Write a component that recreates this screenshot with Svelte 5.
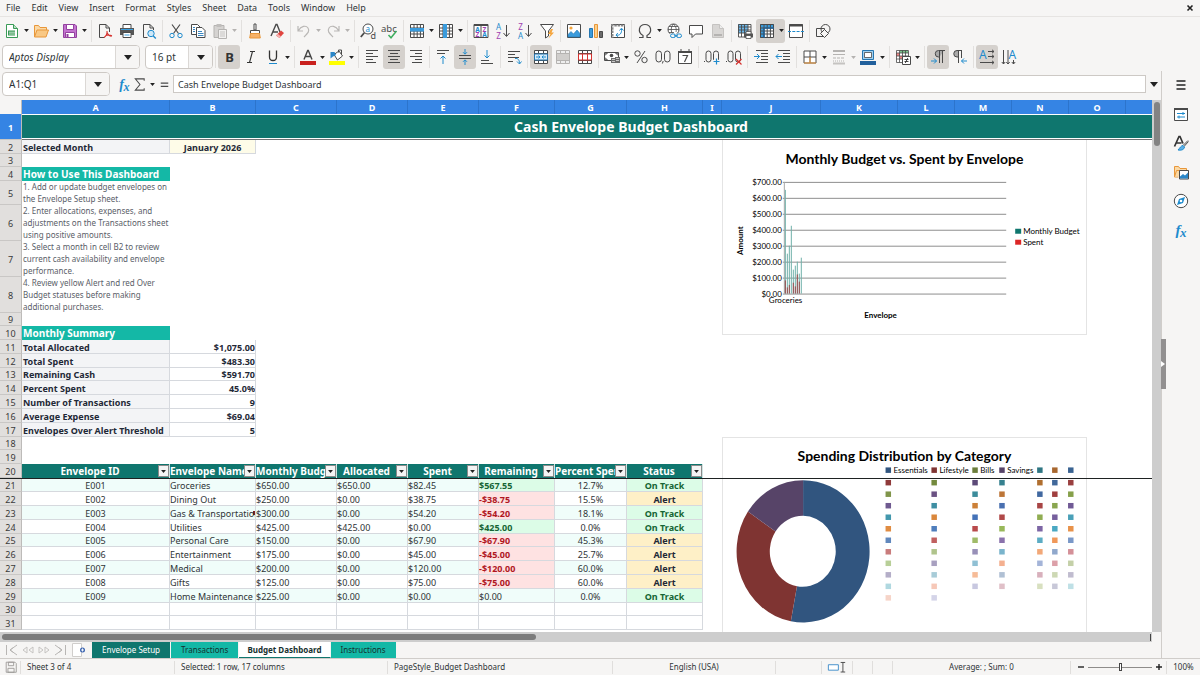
<script>
  const menus = ['File', 'Edit', 'View', 'Insert', 'Format', 'Styles', 'Sheet', 'Data', 'Tools', 'Window', 'Help'];

  const K = '#4a4a4a';
  const B = '#1e8bcd';
  const grid = (c = K) =>
    `<path d="M1.5 1.5h13v13h-13zM1.5 5h13M1.5 8h13M1.5 11h13M5 1.5v13M8.2 1.5v13M11.4 1.5v13" fill="none" stroke="${c}"/>`;
  const lines = (list) =>
    list.map(([x1, x2, y]) => `<path d="M${x1} ${y}h${x2 - x1}" stroke="${K}" fill="none"/>`).join('');

  const icons = {
    new: `<path d="M2.5 1.5h7l4 4v9h-11z" fill="#fff" stroke="#3a9b57"/><path d="M9.5 1.5v4h4" fill="#b9e0c4" stroke="#3a9b57"/><path d="M4 7.5h7v5H4z" fill="#3a9b57"/><path d="M5 9.2h8M5 11h8" stroke="#fff" stroke-width=".7"/>`,
    open: `<path d="M1.5 14V2.5h4l1.5 2h6.500v3" fill="#fbd9a5" stroke="#e8973a"/><path d="M1.500 14L4 7h11.500l-2.500 7z" fill="#f9c884" stroke="#e8973a"/>`,
    save: `<path d="M1.500 1.500h11.500l1.500 1.500v11.500h-13z" fill="#c373cf" stroke="#93419f"/><path d="M4.500 1.500h7v5h-7z" fill="#fff" stroke="#93419f"/><path d="M3.500 9.500h9v5h-9z" fill="#fff" stroke="#93419f"/><path d="M5.500 11v3.500" stroke="#93419f" stroke-width="2"/>`,
    pdf: `<path d="M2.500 14.500v-13h6.500l3.500 3.500v4M2.500 14.500h5" fill="none" stroke="${K}"/><path d="M9 1.500v3.500h3.500" fill="none" stroke="${K}"/><path d="M7 14.500c2-1 3.500-4 3-6.500M9.800 9c1 3 3 4 5 4.200M7 14.500c1.500-2.500 5-3 8-1.800" fill="none" stroke="#d6322f" stroke-width="1.100"/>`,
    print: `<path d="M4 5V1.500h8V5" fill="#fff" stroke="${K}"/><path d="M1 5h14v7H1z" fill="#565656"/><path d="M2 6.500h12" stroke="#3aa0e0"/><path d="M4 9.500h8v5H4z" fill="#fff" stroke="${K}"/><path d="M5.500 12h5" stroke="#3aa0e0"/>`,
    preview: `<path d="M2.500 14.500v-13h6.500l3.500 3.500v2M2.500 14.500h4" fill="none" stroke="${K}"/><path d="M9 1.500v3.500h3.500" fill="none" stroke="${K}"/><circle cx="10" cy="10.500" r="3.200" fill="#cfe8f8" stroke="${B}"/><path d="M12.300 13l2.500 2.500" stroke="${B}" stroke-width="1.400"/>`,
    cut: `<path d="M4 1.500l6.500 9M12 1.500l-6.500 9" stroke="${K}" stroke-width="1.200" fill="none"/><circle cx="4" cy="12.500" r="2.200" fill="none" stroke="${B}"/><circle cx="12" cy="12.500" r="2.200" fill="none" stroke="${B}"/>`,
    copy: `<path d="M1.500 1.500h6l2.500 2.500v7.500h-8.500z" fill="#fff" stroke="${K}"/><path d="M6.500 4.500h5.500l3 3v7h-8.500z" fill="#fff" stroke="${K}"/><path d="M8 8.500h4M8 10.500h5.500M8 12.500h5.500M3 4.500h2M3 6.500h2M3 8.500h2" stroke="#3a87c0"/>`,
    paste: `<path d="M2 2.500h10v12H2z" fill="#d5d3d1" stroke="#b5b3b1"/><path d="M4.500 1h5v3h-5z" fill="#c0bebc"/><path d="M6.500 6.500h8v9h-8z" fill="#f2f1f0" stroke="#b5b3b1"/><path d="M8 9h5M8 11h5M8 13h5" stroke="#c5c3c1"/>`,
    brush: `<path d="M7 1h2v6H7z" fill="#fff" stroke="${K}"/><path d="M3.500 7.500h9v3h-9z" fill="#fff" stroke="${K}"/><path d="M3.500 10.500h9l.8 4.500H2.700z" fill="#f7b268" stroke="#e8973a"/>`,
    clear: `<path d="M2 13L7 1.500h1L11 9M4 9h5" fill="none" stroke="${K}" stroke-width="1.400"/><path d="M12 7.500l3 2.500-4.500 5-3.500-2.500z" fill="#e0443f"/><path d="M7 12.500l1.800-1.800 3.200 2.700-1.500 1.600z" fill="#f4b0ae"/>`,
    undo: `<path d="M2 3v5h5M2.500 7.500C5 3 10 2 12 5s0 5-4 9" fill="none" stroke="#b9b7b5" stroke-width="1.200"/>`,
    redo: `<path d="M14 3v5H9M13.500 7.500C11 3 6 2 4 5s0 5 4 9" fill="none" stroke="#b9b7b5" stroke-width="1.200"/>`,
    find: `<circle cx="8" cy="6" r="5" fill="#fff" stroke="${K}"/><path d="M4.300 9.700L.8 14" stroke="${K}" stroke-width="1.800"/><text x="5.400" y="8.500" font-size="8" font-family="Noto Sans" fill="${B}">a</text><text x="10.500" y="15.500" font-size="9" font-family="Noto Sans" fill="${K}">d</text>`,
    spell: `<text x="-1" y="8.500" font-size="9.500" font-family="Noto Sans" fill="${K}">abc</text><path d="M6.500 12l2.500 2.800L14.500 8" fill="none" stroke="#3fae5f" stroke-width="1.500"/>`,
    rows: `<path d="M1.500 1.500h13v13h-13z" fill="#fff"/>${grid()}<path d="M1 5h14v3.500H1z" fill="#3a9bdc"/>`,
    cols: `<path d="M1.500 1.500h13v13h-13z" fill="#fff"/>${grid()}<path d="M5 1h4v14H5z" fill="#3a9bdc"/>`,
    sort: `<path d="M1 1.500h14v13H1zM8 1.500v13" fill="#fff" stroke="${K}"/><path d="M1 2h14" stroke="${K}" stroke-width="2"/><g font-size="6.500" font-weight="bold" font-family="Noto Sans"><text x="2.200" y="8.500" fill="${B}">A</text><text x="2.400" y="14" fill="#a03fb0">Z</text><text x="9.400" y="8.500" fill="#a03fb0">Z</text><text x="9.200" y="14" fill="${B}">A</text></g>`,
    asc: `<g font-size="8" font-family="Noto Sans"><text x="1" y="7" fill="${B}">A</text><text x="1.200" y="15.500" fill="#a03fb0">Z</text></g><path d="M11.500 2v11M8.500 10l3 3.500 3-3.500" fill="none" stroke="${K}"/>`,
    desc: `<g font-size="8" font-family="Noto Sans"><text x="1.200" y="7" fill="#a03fb0">Z</text><text x="1" y="15.500" fill="${B}">A</text></g><path d="M11.500 2v11M8.500 10l3 3.500 3-3.500" fill="none" stroke="${K}"/>`,
    filter: `<path d="M1.500 1.500h13L9.500 8v5l-3 2V8z" fill="#fff" stroke="${K}"/><path d="M12 6l-3 5h2.500L9.500 15.500 15 9.500h-2.500L14 6z" fill="#f4a53d"/>`,
    image: `<path d="M1.500 1.500h13v13h-13z" fill="#fff" stroke="${K}"/><circle cx="5" cy="5" r="1.600" fill="#f4a53d"/><path d="M2 14v-2.500l3-3 2.500 2.500L11 7l3 3.500V14z" fill="#3a9bdc" stroke="#2576b0" stroke-width=".6"/>`,
    chart: `<path d="M1.500 5.500h3v9h-3z" fill="#3a9bdc" stroke="#2576b0"/><path d="M6.500 1.500h3v13h-3z" fill="#fbd08a" stroke="#e8973a"/><path d="M11.500 8.500h3v6h-3z" fill="#6b6b6b" stroke="${K}"/>`,
    pivot: `<path d="M1.500 1.500h13v13h-13z" fill="#fff" stroke="${K}"/><path d="M1 2.500h14M2.500 1v14" stroke="#8a8a8a" stroke-width="2" stroke-dasharray="2.500 .8"/><path d="M6 12c4 1 6-2 5.500-6M7.800 10L6 12.200l2 1.500M9.500 7.500l2-2.300L13.500 7.500" fill="none" stroke="${B}"/>`,
    omega: `<path d="M2 14.500h4v-2C0 9 2 1.500 8 1.500s8 7.500 2 11v2h4" fill="none" stroke="${K}" stroke-width="1.200"/>`,
    link: `<circle cx="7.500" cy="6.500" r="5.500" fill="#fff" stroke="${K}"/><path d="M2 6.500h11M3 3.500h9M3 9.500h5M7.500 1c-3 3-3 8 0 11M7.500 1c3 3 3 6 2.500 8" fill="none" stroke="${K}" stroke-width=".8"/><path d="M4 10.500h12v4.500H4z" fill="#f6f5f4"/><rect x="4.500" y="11" width="5" height="3.500" rx="1.700" fill="none" stroke="${B}"/><rect x="10.500" y="11" width="5" height="3.500" rx="1.700" fill="none" stroke="${B}"/><path d="M8 12.800h4" stroke="${B}"/>`,
    comment: `<path d="M1.500 2.500h13v8.500H7.500L4 14.500V11H1.500z" fill="#fff" stroke="${K}"/>`,
    header: `<path d="M2.500 1.500h7l4 4v9h-11z" fill="#d8d6d4" stroke="#c5c3c1"/><path d="M9.500 1.500v4h4" fill="#eee" stroke="#c5c3c1"/><path d="M4 12h8" stroke="#b5b3b1" stroke-width="2"/>`,
    printarea: `<path d="M1.500 1.500h12v12h-12z" fill="#fff"/><path d="M1 1h10v9H1z" fill="#6cb6e8"/><path d="M1.500 1.500h12.500v12.500h-12.500zM1.500 4h12.500M1.500 7h12.500M1.500 10h12.500M4.500 1.500v12.500M7.500 1.500v12.500M11 1.500v12.500" fill="none" stroke="${K}" stroke-width=".9"/><path d="M7 10.500h9v4H7z" fill="#565656"/><path d="M9 8.500h5v2.500H9zM9 12.500h5v3H9z" fill="#fff" stroke="${K}" stroke-width=".8"/>`,
    freeze: `<path d="M1.500 1.500h13v13h-13z" fill="#fff"/><path d="M1 1h14v3.500H5v10.500H1z" fill="#3a9bdc"/>${grid()}<path d="M5 5h10M5 5v10" stroke="#1f5f93" stroke-width="1.500"/>`,
    split: `<path d="M1.500 1.500h13v13h-13z" fill="#fff" stroke="${K}"/><path d="M1 2.500h14" stroke="${K}" stroke-width="2"/><path d="M0 8.500h16" stroke="${B}" stroke-dasharray="3 1.300"/>`,
    shapes: `<path d="M1.500 5.500h8v8h-8z" fill="#f6f5f4" stroke="${K}"/><circle cx="10.500" cy="6" r="4.500" fill="none" stroke="${K}"/><path d="M9.500 6.500l4 4-4 4-4-4z" fill="#f6f5f4" stroke="${K}"/>`,
    bold: `<text x="4.200" y="13" font-size="13" font-weight="bold" font-family="Noto Sans" fill="#333">B</text>`,
    italic: `<path d="M7 2.500h5M4 13.500h5M9.500 2.500l-3 11" stroke="#333" stroke-width="1.100" fill="none"/>`,
    underline: `<path d="M4.500 1.500v6.500q0 3.500 3.500 3.500t3.500-3.500V1.500" stroke="#333" stroke-width="1.300" fill="none"/><path d="M4 14.500h8" stroke="${B}"/>`,
    fontcolor: `<path d="M4 10.500L7.700 1.500h.6L12 10.500M5.200 7.500h5.600" stroke="#444" stroke-width="1.400" fill="none"/><path d="M0 12h16v4H0z" fill="#c9211e"/>`,
    highlight: `<path d="M5 5.500l5-3.500 3.500 5-5 4z" fill="#fff" stroke="${K}"/><path d="M9.500 3.500V1h3v4" fill="none" stroke="${K}"/><path d="M1.500 9.500V3h4l1.500 3-3 1.500z" fill="#2a86c8"/><path d="M0 12h16v4H0z" fill="#ff0"/>`,
    left: lines([[2, 14, 1.5], [2, 9, 4.5], [2, 14, 7.5], [2, 9, 10.5], [2, 12, 13.5]]),
    center: lines([[2, 14, 1.5], [4, 12, 4.5], [2, 14, 7.5], [4, 12, 10.5], [2, 14, 13.5]]),
    right: lines([[2, 14, 1.5], [7, 14, 4.5], [2, 14, 7.5], [7, 14, 10.5], [4, 14, 13.5]]),
    top: lines([[2, 14, 1.5], [2, 10, 4.5]]) + `<path d="M8 15V7M5.500 9.500L8 7l2.500 2.500" fill="none" stroke="${B}"/>`,
    middle: lines([[2, 14, 6.5], [2, 14, 9.5]]) + `<path d="M8 0v5M6 3.200l2 2 2-2M8 16v-5M6 12.800l2-2 2 2" fill="none" stroke="${B}"/>`,
    bottom: lines([[2, 10, 11.5], [2, 14, 14.5]]) + `<path d="M8 1v8M5.500 6.500L8 9l2.500-2.500" fill="none" stroke="${B}"/>`,
    wrap: lines([[2, 14, 2.5], [2, 9, 5.5], [2, 13, 8.5], [2, 7, 12.5]]) + `<path d="M9 9.500c3-.5 4.500 1.500 4.500 5M11 12.500l2.500 2.500 2-2.500" fill="none" stroke="${B}"/>`,
    merge: `<path d="M1.500 1.500h13v13h-13zM1.500 4.500h13M1.500 11.500h13M5.500 1.500v3M10.500 1.500v3M5.500 11.500v3M10.500 11.500v3" fill="#fff" stroke="${K}"/><path d="M1.500 5h13v6h-13z" fill="#d6ebfa" stroke="#2576b0"/><path d="M3 8h4M5.500 6.500L7 8 5.500 9.500M13 8H9M10.500 6.500L9 8l1.500 1.500" fill="none" stroke="${B}"/>`,
    mergecells: `<path d="M1.500 1.500h13v13h-13zM1.500 4.500h13M1.500 11.500h13M5.500 1.500v3M10.500 1.500v3M5.500 11.500v3M10.500 11.500v3" fill="#eee" stroke="#b5b3b1"/><path d="M2 5h12v6H2z" fill="#d0cecc"/>`,
    unmerge: `<path d="M1.500 1.500h13v13h-13zM1.500 4.500h13M1.500 11.500h13M5.500 1.500v3M10.500 1.500v3M5.500 11.500v3M10.500 11.500v3" fill="#fff" stroke="${K}"/><path d="M1.500 5h13v6h-13zM5.500 5v6M10.500 5v6" fill="#fff" stroke="#d6322f"/>`,
    currency: `<path d="M.5 3.500h14v8H.5z" fill="#fff" stroke="${K}"/><path d="M1 4l2.500 0L1 6.500M14 4h-2.500L14 6.500M1 11h2.500L1 8.500" fill="#999" stroke="${K}" stroke-width=".7"/><circle cx="7.500" cy="6.500" r="1.800" fill="${K}"/><path d="M7 9h5v5H7zM11 8h5v6h-5z" fill="#6b6b6b"/><path d="M8 10.500h3M8 12.500h3M12 9.500h3M12 11.500h3" stroke="#ddd" stroke-width=".8"/>`,
    percent: `<circle cx="4.500" cy="4.500" r="2.700" fill="none" stroke="${K}"/><circle cx="11.500" cy="11" r="2.700" fill="none" stroke="${K}"/><path d="M12 2L4 14" stroke="${K}"/>`,
    number: `<rect x="1" y="2" width="5.500" height="11" rx="2.750" fill="none" stroke="${K}"/><rect x="9.500" y="2" width="5.500" height="11" rx="2.750" fill="none" stroke="${K}"/><path d="M8.200 12l-.8 2.500" stroke="${K}"/>`,
    date: `<path d="M1.500 2.500h13v12h-13z" fill="#fff" stroke="${K}"/><path d="M1 3h14" stroke="${K}" stroke-width="2"/><path d="M4 0v3M12 0v3" stroke="${K}"/><path d="M5.500 6.500h5l-3 6.500" fill="none" stroke="${K}" stroke-width="1.200"/>`,
    adddec: `<path d="M0 12.500h1" stroke="${K}"/><rect x="2" y="2" width="5" height="11" rx="2.500" fill="none" stroke="${K}"/><rect x="9.500" y="2" width="5" height="11" rx="2.500" fill="none" stroke="${K}"/><path d="M9 12.500h7M12.500 9v7" stroke="#f6f5f4" stroke-width="3"/><path d="M9.500 12.500h6M12.500 9.500v6" stroke="${B}" stroke-width="1.200"/>`,
    deldec: `<path d="M0 12.500h1" stroke="${K}"/><rect x="2" y="2" width="5" height="11" rx="2.500" fill="none" stroke="${K}"/><rect x="9.500" y="2" width="5" height="11" rx="2.500" fill="none" stroke="${K}"/><path d="M10 10l5.500 5.500M15.500 10L10 15.500" stroke="#d6322f" stroke-width="1.200"/>`,
    indent: lines([[3, 15, 1.5], [8, 15, 4.5], [8, 15, 7.5], [8, 15, 10.5], [3, 15, 13.5]]) + `<path d="M1 7.500h5.500M4 5l2.500 2.500L4 10" fill="none" stroke="${B}"/>`,
    outdent: lines([[3, 15, 1.5], [8, 15, 4.5], [8, 15, 7.5], [8, 15, 10.5], [3, 15, 13.5]]) + `<path d="M7 7.500H1M3.500 5L1 7.500 3.500 10" fill="none" stroke="${B}"/>`,
    borders: `<path d="M2 2h12v12H2zM8 2v12M2 8h12" fill="#fff" stroke="${K}"/><path d="M2 14h12M8 8v6" stroke="#e8973a" fill="none"/>`,
    linestyle: `<path d="M2 2h12" stroke="#b5b3b1" stroke-width="2"/><path d="M2 5.500h12" stroke="#b5b3b1"/><path d="M2 9h12" stroke="#b5b3b1" stroke-dasharray="3 1"/><path d="M2 12h12" stroke="#b5b3b1" stroke-dasharray="1 1"/><path d="M2 14.500h12" stroke="#c5c3c1" stroke-width="2"/>`,
    bordercolor: `<path d="M2.500 1.500h11v9h-11z" fill="#9fd0f0" stroke="#2576b0"/><path d="M4.500 3.500h7v5h-7z" fill="#fff" stroke="${K}" stroke-width=".8"/><path d="M0 12h16v4H0z" fill="#22609c"/>`,
    condfmt: `<path d="M1.500 1.500h12v12h-12z" fill="#fff"/><path d="M5 1h8v3H5z" fill="#7cc28c"/><path d="M1 4h4v3H1zM5 7h3v3H5z" fill="#e88"/><path d="M1.500 1.500h12v12h-12zM1.500 4h12M1.500 7h12M1.500 10h12M4.500 1.500v12M7.500 1.500v12M10.500 1.500v12" fill="none" stroke="${K}" stroke-width=".8"/><path d="M7.500 7.500h8v8h-8z" fill="#fff" stroke="${K}"/><path d="M9.500 10.500h4M9.500 12.500h4M12.800 9l-2.500 5" stroke="#333" stroke-width=".9"/>`,
    ltr: `<path d="M14 1.500H8.500a3 3 0 0 0 0 6.500h1" fill="#aaa"/><path d="M15 1.500H8.500a3.200 3.200 0 0 0 0 6.500h1M9.500 1.500v12.500M12.500 1.500v12.500" fill="none" stroke="${K}"/><path d="M1 12h5.500M4 9.500L6.500 12 4 14.500" fill="none" stroke="${B}"/>`,
    rtl: `<path d="M10 1.500H5a3.200 3.200 0 0 0 0 6.500h1.500V1.500M9.500 1.500V9M6.500 8v6" fill="#aaa" stroke="${K}"/><path d="M15 12H9.500M12 9.500L9.500 12l2.500 2.500" fill="none" stroke="${B}"/>`,
    texth: `<text x="0" y="10" font-size="12" font-family="Noto Sans" fill="${B}">A</text><path d="M9 2.500h6M13 .8l2 1.700-2 1.700M9 7.500h6M13 5.800l2 1.700-2 1.700M1 13.500h14M13 11.800l2 1.700-2 1.700" fill="none" stroke="${K}"/>`,
    textv: `<text x="7.500" y="10" font-size="12" font-family="Noto Sans" fill="${B}">A</text><path d="M2.500 1v14M.8 13l1.700 2 1.700-2M7 1v14M5.300 13L7 15l1.700-2M12.500 11v4M10.800 13l1.700 2 1.700-2" fill="none" stroke="${K}"/>`,
    fx: `<g font-style="italic" font-weight="bold" font-family="Liberation Serif" fill="${B}"><text x="2.500" y="12.500" font-size="15">f</text><text x="7" y="14.500" font-size="13">x</text></g>`,
    sigma: `<path d="M13 4V2H3.500l5 6-5 6H13v-2" fill="none" stroke="${K}" stroke-width="1.100"/>`,
    equals: `<path d="M4 6.500h8M4 10h8" stroke="${K}" stroke-width="1.500"/>`,
    burger: `<path d="M3.500 4h9M3.500 8h9M3.500 12h9" stroke="#222" stroke-width="1.300"/>`,
    props: `<path d="M1.500 2.500h13v12h-13z" fill="#fff" stroke="${K}"/><path d="M1 3h14" stroke="${K}" stroke-width="2"/><path d="M4 7.500h8M4 11h8M10 6v3M6 9.500v3" stroke="${B}"/>`,
    styles: `<path d="M1.500 11.500L6 1.500h1l3 7M3.500 8h5" fill="none" stroke="#333" stroke-width="1.700"/><path d="M15 5.500l-5 5M15.500 6.500l-4.500 5" stroke="${K}"/><path d="M10 10.500c-2 0-3 2.500-5 4.500 3 .5 6 0 6.500-3z" fill="#5fb0e6" stroke="${B}"/>`,
    gallery: `<path d="M1.500 13V2.500h4l1.500 2h6.500V8M1.500 13h4" fill="#fbd9a5" stroke="#e8973a"/><path d="M1.500 13l2-6.500h12v3" fill="#fbd9a5" stroke="#e8973a"/><path d="M6.500 6.500h9v8.500h-9z" fill="#fff" stroke="${K}"/><path d="M7 14.500v-2l3-2.500 2 1.500 3-3v6z" fill="#2a86c8"/>`,
    navigator: `<circle cx="8" cy="8" r="6.700" fill="#fff" stroke="${K}"/><path d="M12 4l-2 6-6 2 2-6z" fill="#1e8bcd"/><circle cx="8" cy="8" r="1.300" fill="#fff"/>`,
    disk: `<path d="M2.500 2.500h10l1.500 1.500v10h-11.500z" fill="none" stroke="#9a9896"/><path d="M5 2.500h6v4H5zM4.500 9.500h7v4.500h-7z" fill="none" stroke="#9a9896"/>`,
    first: `<path d="M2.500 3v10" stroke="#b8b6b4"/><path d="M13 3L6 8l7 5M9.500 5.500L6 8l3.500 2.500" fill="none" stroke="#b8b6b4"/>`,
    prev: `<path d="M7 5L3 8l4 3zM13 5L9 8l4 3z" fill="none" stroke="#c5c3c1"/>`,
    next: `<path d="M3 5l4 3-4 3zM9 5l4 3-4 3z" fill="none" stroke="#c5c3c1"/>`,
    last: `<path d="M13.500 3v10" stroke="#b8b6b4"/><path d="M3 3l7 5-7 5M6.500 5.500L10 8l-3.500 2.500" fill="none" stroke="#b8b6b4"/>`,
    addsheet: `<path d="M2.500 1.500h9v13h-9z" fill="#fff" stroke="#d0cecc"/><circle cx="12.500" cy="8" r="2.500" fill="#3b64b0"/><path d="M11 8h3M12.500 6.500v3" stroke="#fff" stroke-width=".9"/>`
  };

  // "+" marks a drop-down half, "*" a pressed button, "-" a disabled one, "|" a divider
  const parse = (s) =>
    s.split(' ').map((t) => {
      if (t === '|') return { sep: true };
      const [, name, flags] = t.match(/^([a-z]+)(.*)$/);
      return { name, menu: flags.includes('+'), on: flags.includes('*'), off: flags.includes('-') };
    });

  const standard = parse(
    'new+ open+ save+ | pdf print preview | cut copy paste+- | brush clear | undo+- redo+- | find spell | rows+ cols+ | sort asc desc filter | image chart pivot | omega+ link comment header- | printarea freeze+* split | shapes'
  );
  const formatting = parse(
    'bold* italic underline+ | fontcolor+ highlight+ | left center* right | top middle* bottom | wrap | merge* mergecells- unmerge | currency+ percent number date | adddec deldec | indent outdent | borders+ linestyle+- bordercolor+ | condfmt+ | ltr* rtl | texth* textv'
  );
  const sidebar = ['burger', 'props', 'styles', 'gallery', 'navigator', 'fx'];

  // the last two columns lie past the window's edge and carry no visible letter
  const columns = [
    ['A', 148], ['B', 86], ['C', 81], ['D', 71], ['E', 71], ['F', 76], ['G', 72], ['H', 76], ['I', 19],
    ['J', 99], ['K', 77], ['L', 57], ['M', 57], ['N', 57], ['O', 57], ['', 57], ['', 57]
  ];
  const sheetWidth = 22 + columns.reduce((sum, c) => sum + c[1], 0);

  const notes = [
    [5, 24, '1. Add or update budget envelopes on\nthe Envelope Setup sheet.'],
    [6, 36, '2. Enter allocations, expenses, and\nadjustments on the Transactions sheet\nusing positive amounts.'],
    [7, 36, '3. Select a month in cell B2 to review\ncurrent cash availability and envelope\nperformance.'],
    [8, 36, '4. Review yellow Alert and red Over\nBudget statuses before making\nadditional purchases.']
  ];
  const summary = [
    [11, 14, 'Total Allocated', '$1,075.00'],
    [12, 14, 'Total Spent', '$483.30'],
    [13, 13, 'Remaining Cash', '$591.70'],
    [14, 14, 'Percent Spent', '45.0%'],
    [15, 14, 'Number of Transactions', '9'],
    [16, 14, 'Average Expense', '$69.04'],
    [17, 14, 'Envelopes Over Alert Threshold', '5']
  ];
  const heads = ['Envelope ID', 'Envelope Name', 'Monthly Budget', 'Allocated', 'Spent', 'Remaining', 'Percent Spent', 'Status'];
  const envelopes = [
    [21, 14, 'E001', 'Groceries', 650, '$650.00', 82.45, '$567.55', '12.7%', 'On Track'],
    [22, 14, 'E002', 'Dining Out', 250, '$0.00', 38.75, '-$38.75', '15.5%', 'Alert'],
    [23, 14, 'E003', 'Gas & Transportation', 300, '$0.00', 54.2, '-$54.20', '18.1%', 'On Track'],
    [24, 14, 'E004', 'Utilities', 425, '$425.00', 0, '$425.00', '0.0%', 'On Track'],
    [25, 13, 'E005', 'Personal Care', 150, '$0.00', 67.9, '-$67.90', '45.3%', 'Alert'],
    [26, 14, 'E006', 'Entertainment', 175, '$0.00', 45, '-$45.00', '25.7%', 'Alert'],
    [27, 14, 'E007', 'Medical', 200, '$0.00', 120, '-$120.00', '60.0%', 'Alert'],
    [28, 14, 'E008', 'Gifts', 125, '$0.00', 75, '-$75.00', '60.0%', 'Alert'],
    [29, 14, 'E009', 'Home Maintenance', 225, '$0.00', 0, '$0.00', '0.0%', 'On Track']
  ];
  const money = (n) => '$' + n.toFixed(2);
  const tone = (v) => (v.startsWith('-') ? 'neg' : v === '$0.00' ? '' : 'pos');

  const ticks = [700, 600, 500, 400, 300, 200, 100, 0];
  const yOf = (v) => 154 - (v * 112) / 700;

  const slice = (a, b) => {
    const p = (deg, r) => {
      const t = (deg * Math.PI) / 180;
      return `${80.3 + Math.sin(t) * 66.7 * r} ${114.7 - Math.cos(t) * 71.3 * r}`;
    };
    const big = b - a > 180 ? 1 : 0;
    return `M${p(a, 1)}A66.7 71.3 0 ${big} 1 ${p(b, 1)}L${p(b, 0.5)}A33.3 35.6 0 ${big} 0 ${p(a, 0.5)}Z`;
  };
  const keyX = [166, 212, 253, 280, 318, 333, 349];
  const keyLabels = ['Essentials', 'Lifestyle', 'Bills', 'Savings'];
  const keyColors = [
    '31557f 7f3432 6b7d3a 574468 2f7683 a8672f 3a6392',
    '8f3a3a 748a3e 5c4a78 36818f b06f2f 41689a 9a4040',
    '80954a 6b5283 3c8c9b bd7638 4168a0 a03f3f 86a04a',
    '6f5a90 3f8fa3 cc8038 4a70b0 a84545 8aa650 705a95',
    '4398ad da873c 4472b8 b04848 90ad52 765f9d 4aa0b8',
    'e08c42 4f7ebc b94a4c 98b85a 7d66a5 4aa8c2 e8924a',
    '6088bd c06060 a0bb68 8a72ac 5cacc4 f0985a 7a98c8',
    'c97c7c b0c48c 9890b8 7ab4cc f2a878 90a8cc d49098',
    'b8cf98 a8a0c0 90c0d4 f4b090 a4b4d8 dca0a8 c4d0a8',
    'b4aec8 a8ccd8 f6bc98 b0c0d4 d8b0bc cdd8b4 c0bccf',
    'b0d8e0 f6c8b8 c8c8e0 e0c0c8 d8e0c0 c8c8d8 bfe0e6',
    'f6d4c8 d4d4e8'
  ].map((r) => r.split(' '));
  const keyY = (r) => (r === 0 ? 33 : 34 + r * 11.55);

  let fontName = $state('Aptos Display');
  let fontSize = $state('16 pt');
  let cellRef = $state('A1:Q1');
  let formula = $state('Cash Envelope Budget Dashboard');
  let zoom = $state(50);
</script>

{#snippet icon(name)}
  <svg class="icon" viewBox="0 0 16 16" aria-hidden="true">{@html icons[name]}</svg>
{/snippet}

{#snippet caret(size)}
  <svg class="caret {size}" viewBox="0 0 8 5" aria-hidden="true"><path d="M0 0h8L4 5z" fill="currentColor" /></svg>
{/snippet}

{#snippet tools(items)}
  {#each items as t}
    {#if t.sep}
      <span class="sep"></span>
    {:else if t.menu}
      <span class="split" class:on={t.on}>
        <button class="tool" aria-label={t.name} disabled={t.off}>{@render icon(t.name)}</button>
        <button class="drop" aria-label="{t.name} options" disabled={t.off}>{@render caret('small')}</button>
      </span>
    {:else}
      <button class="tool" class:on={t.on} aria-label={t.name} disabled={t.off}>{@render icon(t.name)}</button>
    {/if}
  {/each}
{/snippet}

{#snippet empty(n)}
  {#each Array(n) as _}<td></td>{/each}
{/snippet}

<div class="app">
  <nav class="menubar">
    {#each menus as m}<button>{m}</button>{/each}
    <button class="close" aria-label="Close document">
      <svg viewBox="0 0 8 8" aria-hidden="true"><path d="M1.500 1.500l5 5M6.500 1.500l-5 5" stroke="#222" stroke-width="1.600" /></svg>
    </button>
  </nav>

  <div class="toolbar" role="toolbar" aria-label="Standard">{@render tools(standard)}</div>

  <div class="toolbar formatting" role="toolbar" aria-label="Formatting">
    <div class="combo font">
      <input aria-label="Font name" bind:value={fontName} />
      <button aria-label="Font list">{@render caret('large')}</button>
    </div>
    <div class="combo size">
      <input aria-label="Font size" bind:value={fontSize} />
      <button aria-label="Size list">{@render caret('large')}</button>
    </div>
    <span class="sep"></span>
    {@render tools(formatting)}
  </div>

  <div class="work">
    <main>
      <div class="formulabar">
        <div class="combo ref">
          <input aria-label="Name box" bind:value={cellRef} />
          <button aria-label="Cell ranges">{@render caret('large')}</button>
        </div>
        <div class="functions">
          <button aria-label="Function wizard">{@render icon('fx')}</button>
          <button aria-label="Sum">{@render icon('sigma')}</button>
          <button class="drop" aria-label="Sum options">{@render caret('small')}</button>
          <button aria-label="Formula">{@render icon('equals')}</button>
        </div>
        <input class="formula" aria-label="Formula input" bind:value={formula} />
        <button class="expand" aria-label="Expand formula bar">{@render caret('large')}</button>
      </div>

      <div class="viewport">
        <div class="sheet">
          <table style:width="{sheetWidth}px">
            <colgroup>
              <col style:width="22px" />
              {#each columns as c}<col style:width="{c[1]}px" />{/each}
            </colgroup>
            <thead>
              <tr class="letters">
                <th class="corner"></th>
                {#each columns as c}<th scope="col">{c[0]}</th>{/each}
              </tr>
            </thead>
            <tbody>
              <tr class="banner">
                <th scope="row">1</th>
                <td colspan="17">Cash Envelope Budget Dashboard</td>
              </tr>
              <tr>
                <th scope="row">2</th>
                <td class="line label">Selected Month</td>
                <td class="line month">January 2026</td>
                {@render empty(15)}
              </tr>
              <tr class="short"><th scope="row">3</th>{@render empty(17)}</tr>
              <tr><th scope="row">4</th><td class="section">How to Use This Dashboard</td>{@render empty(16)}</tr>
              {#each notes as [n, h, text]}
                <tr style:height="{h}px"><th scope="row">{n}</th><td class="note">{text}</td>{@render empty(16)}</tr>
              {/each}
              <tr class="short"><th scope="row">9</th>{@render empty(17)}</tr>
              <tr><th scope="row">10</th><td class="section">Monthly Summary</td>{@render empty(16)}</tr>
              {#each summary as [n, h, text, value]}
                <tr style:height="{h}px">
                  <th scope="row">{n}</th>
                  <td class="line label">{text}</td>
                  <td class="line total">{value}</td>
                  {@render empty(15)}
                </tr>
              {/each}
              <tr class="short"><th scope="row">18</th>{@render empty(17)}</tr>
              <tr><th scope="row">19</th>{@render empty(17)}</tr>
              <tr class="heads">
                <th scope="row">20</th>
                {#each heads as h}
                  <td>
                    <div class="head">
                      <span>{h}</span>
                      <button aria-label="Filter {h}">{@render caret('small')}</button>
                    </div>
                  </td>
                {/each}
                {@render empty(9)}
              </tr>
              {#each envelopes as [n, h, id, name, budget, allocated, spent, left, pct, status]}
                <tr class:band={n % 2 === 1} style:height="{h}px">
                  <th scope="row">{n}</th>
                  <td class="line mid">{id}</td>
                  <td class="line" class:more={name.length > 18}>{name}</td>
                  <td class="line">{money(budget)}</td>
                  <td class="line">{allocated}</td>
                  <td class="line">{money(spent)}</td>
                  <td class="line {tone(left)}">{left}</td>
                  <td class="line mid">{pct}</td>
                  <td class="line mid {status === 'Alert' ? 'alert' : 'pos'}">{status}</td>
                  {@render empty(9)}
                </tr>
              {/each}
              {#each [30, 31] as n}
                <tr class:short={n === 30}>
                  <th scope="row">{n}</th>
                  {#each Array(8) as _}<td class="line"></td>{/each}
                  {@render empty(9)}
                </tr>
              {/each}
            </tbody>
          </table>

          <figure class="chart first">
            <svg viewBox="0 0 364 195" role="img" aria-label="Monthly Budget vs. Spent by Envelope">
              <text class="title" x="182" y="24">Monthly Budget vs. Spent by Envelope</text>
              {#each ticks as t}
                <path d="M60 {Math.round(yOf(t)) + 0.5}h224" stroke="#8e8e8e" />
                <text class="tick" x="59" y={yOf(t) + 3}>{money(t)}</text>
              {/each}
              <path d="M61.500 42v112" stroke="#a8a8a8" />
              {#each envelopes as e, i}
                <rect x={62 + i * 2} y={yOf(e[4])} width="1" height={154 - yOf(e[4])} fill="#6fb0a9" />
                <rect x={62 + i * 2} y={yOf(e[6])} width="1" height={154 - yOf(e[6])} fill="#9c4a4c" />
              {/each}
              <text class="key" x="46" y="163">Groceries</text>
              <text class="axis" x="158" y="179">Envelope</text>
              <text class="axis" transform="translate(20 101) rotate(-90)">Amount</text>
              <path d="M293 89h6v5h-6z" fill="#0f766e" />
              <text class="key" x="301" y="94">Monthly Budget</text>
              <path d="M293 100h6v5h-6z" fill="#dc2626" />
              <text class="key" x="301" y="105">Spent</text>
            </svg>
          </figure>

          <figure class="chart second">
            <svg viewBox="0 1 364 195" role="img" aria-label="Spending Distribution by Category">
              <text class="title" x="182" y="24">Spending Distribution by Category</text>
              <path d={slice(0, 190.6)} fill="#31557f" />
              <path d={slice(190.6, 304)} fill="#7f3432" />
              <path d={slice(304, 360)} fill="#574468" />
              {#each keyColors as row, r}
                {#each row as color, c}
                  <rect x={keyX[c] - 3} y={keyY(r) - 2.5} width="5.500" height="5.500" fill="#{color}" />
                {/each}
              {/each}
              {#each keyLabels as text, c}
                <text class="key" x={keyX[c] + 5} y="36">{text}</text>
              {/each}
            </svg>
          </figure>
          <div class="freeze"></div>
        </div>
        <div class="vscroll"><span></span></div>
      </div>

      <div class="hscroll"><span></span><i></i></div>

      <div class="tabs">
        <div class="nav">
          {#each ['first', 'prev', 'next', 'last'] as n}<button aria-label="{n} sheet">{@render icon(n)}</button>{/each}
        </div>
        <button class="add" aria-label="Add sheet">{@render icon('addsheet')}</button>
        <button class="tab dark">Envelope Setup</button>
        <button class="tab teal">Transactions</button>
        <button class="tab active">Budget Dashboard</button>
        <button class="tab teal">Instructions</button>
      </div>
    </main>

    <aside>
      {#each sidebar as s}<button aria-label={s}>{@render icon(s)}</button>{/each}
      <div class="handle"><svg viewBox="0 0 4 6" aria-hidden="true"><path d="M0 0l4 3-4 3z" fill="#fff" /></svg></div>
    </aside>
  </div>

  <footer>
    <span class="cell disk">{@render icon('disk')}</span>
    <span class="cell page">Sheet 3 of 4</span>
    <span class="cell selection">Selected: 1 row, 17 columns</span>
    <span class="cell style">PageStyle_Budget Dashboard</span>
    <span class="cell lang">English (USA)</span>
    <span class="cell gap"></span>
    <span class="cell mode">
      <svg viewBox="0 0 22 12" aria-hidden="true">
        <path d="M1.500 3.500h11v6h-11z" fill="#fff" stroke="#3a8ac8" />
        <path d="M15 1h5M15 11.500h5M17.500 1v10.500" fill="none" stroke="#444" />
      </svg>
    </span>
    <span class="cell tiny"></span>
    <span class="cell tiny"></span>
    <span class="cell sum">Average: ; Sum: 0</span>
    <span class="cell zoom">
      <button aria-label="Zoom out"><svg viewBox="0 0 8 8" aria-hidden="true"><path d="M1 4h6" stroke="#222" stroke-width="1.400" /></svg></button>
      <input type="range" aria-label="Zoom" bind:value={zoom} />
      <button aria-label="Zoom in"><svg viewBox="0 0 8 8" aria-hidden="true"><path d="M1 4h6M4 1v6" stroke="#222" stroke-width="1.400" /></svg></button>
    </span>
    <span class="percent">100%</span>
  </footer>
</div>

<style>
  :global(body) {
    margin: 0;
    background: #f6f5f4;
  }
  .app {
    display: flex;
    flex-direction: column;
    height: 100vh;
    overflow: hidden;
    background: #f6f5f4;
    color: #2e3436;
    font: 9px/12px 'Noto Sans', 'Open Sans', sans-serif;
  }
  .app :global(*) {
    box-sizing: border-box;
  }
  button {
    display: flex;
    align-items: center;
    justify-content: center;
    padding: 0;
    border: 0;
    background: none;
    color: inherit;
    font: inherit;
  }
  input {
    min-width: 0;
    border: 0;
    padding: 0;
    background: none;
    color: inherit;
    font: inherit;
  }
  .icon {
    display: block;
    width: 16px;
    height: 16px;
    flex: none;
    overflow: visible;
  }
  .caret {
    display: block;
    color: #222;
  }
  .caret.small {
    width: 5px;
    height: 3px;
  }
  .caret.large {
    width: 8px;
    height: 5px;
  }
  button:disabled .caret {
    color: #b5b3b1;
  }

  .menubar {
    display: flex;
    flex: none;
    height: 17px;
    padding: 0 6px;
    gap: 11px;
    border-bottom: 1px solid #e6e4e2;
  }
  .menubar .close {
    margin-left: auto;
  }
  .close svg {
    width: 8px;
    height: 8px;
  }

  .toolbar {
    display: flex;
    flex: none;
    align-items: center;
    height: 27px;
    padding-left: 1px;
  }
  .formatting {
    padding: 0 0 1px 2px;
  }
  .tool {
    width: 22px;
    height: 24px;
    flex: none;
    border-radius: 3px;
  }
  .split {
    display: flex;
    flex: none;
    border-radius: 3px;
  }
  .drop {
    width: 7px;
    flex: none;
  }
  .on {
    background: #d5d1cd;
  }
  .sep {
    width: 1px;
    height: 22px;
    margin: 0 2px;
    flex: none;
    background: #e2e0de;
  }
  .split + .sep {
    margin: 0 2px 0 3px;
  }

  .combo {
    display: flex;
    flex: none;
    height: 24px;
    border: 1px solid #cdc9c5;
    border-radius: 4px;
    background: #fff;
    overflow: hidden;
    font-size: 10px;
  }
  .combo input {
    flex: 1;
    padding-left: 6px;
  }
  .combo button {
    width: 24px;
    border-left: 1px solid #dbd8d5;
    background: #f6f5f4;
  }
  .font {
    width: 138px;
    margin-right: 5px;
    font-style: italic;
  }
  .size {
    width: 68px;
  }
  .ref {
    width: 108px;
  }

  .work {
    display: flex;
    flex: 1;
    min-height: 0;
  }
  main {
    display: flex;
    flex: 1;
    flex-direction: column;
    min-width: 0;
  }
  .formulabar {
    display: flex;
    flex: none;
    align-items: center;
    height: 29px;
    padding: 0 0 3px 2px;
  }
  .functions {
    display: flex;
    padding: 0 1px 0 7px;
  }
  .functions .drop {
    width: 10px;
  }
  .functions .icon {
    width: 15px;
    height: 15px;
  }
  .formula {
    flex: 1;
    height: 18px;
    padding-left: 4px;
    border: 1px solid #cdc9c5;
    background: #fff;
  }
  .expand {
    width: 15px;
  }

  .viewport {
    display: flex;
    flex: 1;
    min-height: 0;
  }
  .sheet {
    position: relative;
    flex: 1;
    overflow: hidden;
    background: #fff;
  }
  table {
    table-layout: fixed;
    border-spacing: 0;
  }
  tr {
    height: 14px;
  }
  .short {
    height: 13px;
  }
  th,
  td {
    padding: 1px 0 0;
    overflow: hidden;
    white-space: nowrap;
    line-height: 11px;
  }
  tbody th {
    border-right: 1px solid #bdbbb9;
    border-bottom: 1px solid #c9c7c5;
    background: #e1dfdd;
    color: #3a3a3a;
    font-weight: normal;
  }
  .letters th {
    padding: 0;
    border-right: 1px solid #2c74cc;
    background: #3584e4;
    color: #fff;
  }
  .letters .corner {
    border-right-color: #bdbbb9;
    background: #f6f5f4;
  }
  .banner {
    height: 26px;
  }
  .banner th {
    background: #3584e4;
    color: #fff;
    font-weight: bold;
  }
  .banner td {
    border-bottom: 1px solid #6f7274;
    background: #0f766e;
    box-shadow: inset 0 1px #fff, inset 0 -1px #fff;
    color: #fff;
    font-size: 14px;
    line-height: 20px;
    font-weight: bold;
    text-align: center;
  }
  .line {
    border-right: 1px solid #d6d9de;
    border-bottom: 1px solid #d6d9de;
  }
  .label {
    padding-left: 1px;
    background: #f3f4f6;
    color: #1f2937;
    font-weight: bold;
  }
  .month {
    background: #fefce8;
    color: #1f2937;
    font-weight: bold;
    text-align: center;
  }
  .total {
    color: #1f2937;
    font-weight: bold;
    text-align: right;
  }
  .section {
    padding-left: 1px;
    background: #14b8a6;
    color: #fff;
    font-size: 10px;
    font-weight: bold;
  }
  .note {
    padding: 0 0 0 1px;
    color: #5a6068;
    font-size: 8px;
    line-height: 12px;
    white-space: pre;
  }
  .heads td {
    padding: 0;
  }
  .heads td:has(.head) {
    border-right: 1px solid #cfe3e1;
    background: #0f766e;
  }
  .head {
    display: flex;
    height: 14px;
    align-items: center;
    color: #fff;
    font-size: 10px;
    font-weight: bold;
    line-height: 14px;
    text-align: center;
  }
  .head span {
    flex: 1;
    min-width: 0;
    overflow: hidden;
  }
  .head button {
    width: 11px;
    height: 12px;
    flex: none;
    border: 1px solid #8a8a8a;
    background: #f4f4f4;
  }
  .mid {
    text-align: center;
  }
  .band .line {
    background: #f0fdfa;
  }
  tr .line.pos {
    background: #dcfce7;
    color: #166534;
    font-weight: bold;
  }
  tr .line.neg {
    background: #fee2e2;
    color: #b0171f;
    font-weight: bold;
  }
  tr .line.alert {
    background: #fef0c7;
    color: #1f2937;
    font-weight: bold;
  }
  tr .line.more {
    background: linear-gradient(#7a1f1f, #7a1f1f) right center / 2px 4px no-repeat #f0fdfa;
  }

  .chart {
    position: absolute;
    left: 722px;
    width: 365px;
    margin: 0;
    border: 1px solid #e4e4e4;
    background: #fff;
  }
  .chart svg {
    display: block;
    width: 100%;
    font-family: Lato, sans-serif;
  }
  .first {
    top: 40px;
    border-top: 0;
  }
  .second {
    top: 337px;
  }
  .title {
    font-size: 14px;
    font-weight: bold;
    text-anchor: middle;
  }
  .tick {
    font-size: 8px;
    text-anchor: end;
  }
  .key {
    font-size: 8px;
  }
  .axis {
    font-size: 8px;
    font-weight: bold;
    text-anchor: middle;
  }
  .freeze {
    position: absolute;
    top: 378px;
    left: 0;
    right: 0;
    height: 1px;
    background: #1e2222;
  }

  .vscroll {
    width: 9px;
    flex: none;
    padding: 2px 1px;
    background: #cdcdcd;
  }
  .vscroll span {
    display: block;
    width: 6px;
    height: 44px;
    margin: 0 auto;
    border-radius: 3px;
    background: #838383;
  }
  .hscroll {
    display: flex;
    align-items: center;
    justify-content: space-between;
    flex: none;
    height: 10px;
    margin-right: 9px;
    padding: 0 1px 0 2px;
    background: #cdcdcd;
  }
  .hscroll span {
    width: 46.500%;
    height: 6px;
    border-radius: 3px;
    background: #7c7c7c;
  }
  .hscroll i {
    width: 1px;
    height: 7px;
    background: #444;
  }
  .tabs {
    display: flex;
    flex: none;
    height: 16px;
    font-size: 8px;
  }
  .nav {
    display: flex;
    padding-left: 4px;
  }
  .add {
    width: 24px;
    margin: 0 2px 0 -2px;
  }
  .tab {
    padding: 0 10px;
    border-right: 1px solid #f6f5f4;
    color: #16302e;
  }
  .dark {
    background: #0f766e;
    color: #fff;
  }
  .teal {
    background: #14b8a6;
  }
  .active {
    padding: 0 8px;
    background: #fff;
    border-bottom: 1px solid #0f766e;
    font-weight: bold;
  }

  aside {
    position: relative;
    display: flex;
    flex: none;
    flex-direction: column;
    width: 39px;
    gap: 13px;
    padding-top: 6px;
    border-left: 1px solid #d0cdca;
  }
  .handle {
    position: absolute;
    top: 268px;
    left: -1px;
    display: flex;
    align-items: center;
    width: 5px;
    height: 50px;
    background: #929090;
  }
  .handle svg {
    width: 4px;
    height: 6px;
  }

  footer {
    display: flex;
    flex: none;
    align-items: center;
    height: 17px;
    border-top: 1px solid #d0cdca;
    font-size: 8px;
  }
  .cell {
    display: flex;
    align-items: center;
    flex: none;
    height: 13px;
    padding: 0 6px;
    border-right: 1px solid #e0dedc;
  }
  .disk {
    width: 21px;
    padding: 0 4px;
  }
  .disk .icon {
    width: 14px;
    height: 14px;
  }
  .page {
    width: 154px;
  }
  .selection {
    width: 213px;
  }
  .style {
    flex: 1;
  }
  .lang {
    width: 163px;
    justify-content: center;
  }
  .gap {
    width: 46px;
  }
  .mode {
    width: 31px;
    padding: 0 5px;
  }
  .mode svg {
    width: 22px;
    height: 12px;
  }
  .tiny {
    width: 20px;
  }
  .sum {
    width: 178px;
    justify-content: center;
  }
  .zoom {
    width: 96px;
    padding: 0 3px 0 6px;
    gap: 3px;
  }
  .zoom svg {
    width: 8px;
    height: 8px;
  }
  .zoom input {
    flex: 1;
    height: 10px;
    margin: 0;
    appearance: none;
    background: linear-gradient(#8e8c8a, #8e8c8a) center / 100% 1px no-repeat;
  }
  .zoom input::-webkit-slider-thumb {
    appearance: none;
    width: 3px;
    height: 8px;
    border: 1px solid #444;
    background: #fff;
  }
  .percent {
    width: 33px;
    text-align: center;
  }
</style>
